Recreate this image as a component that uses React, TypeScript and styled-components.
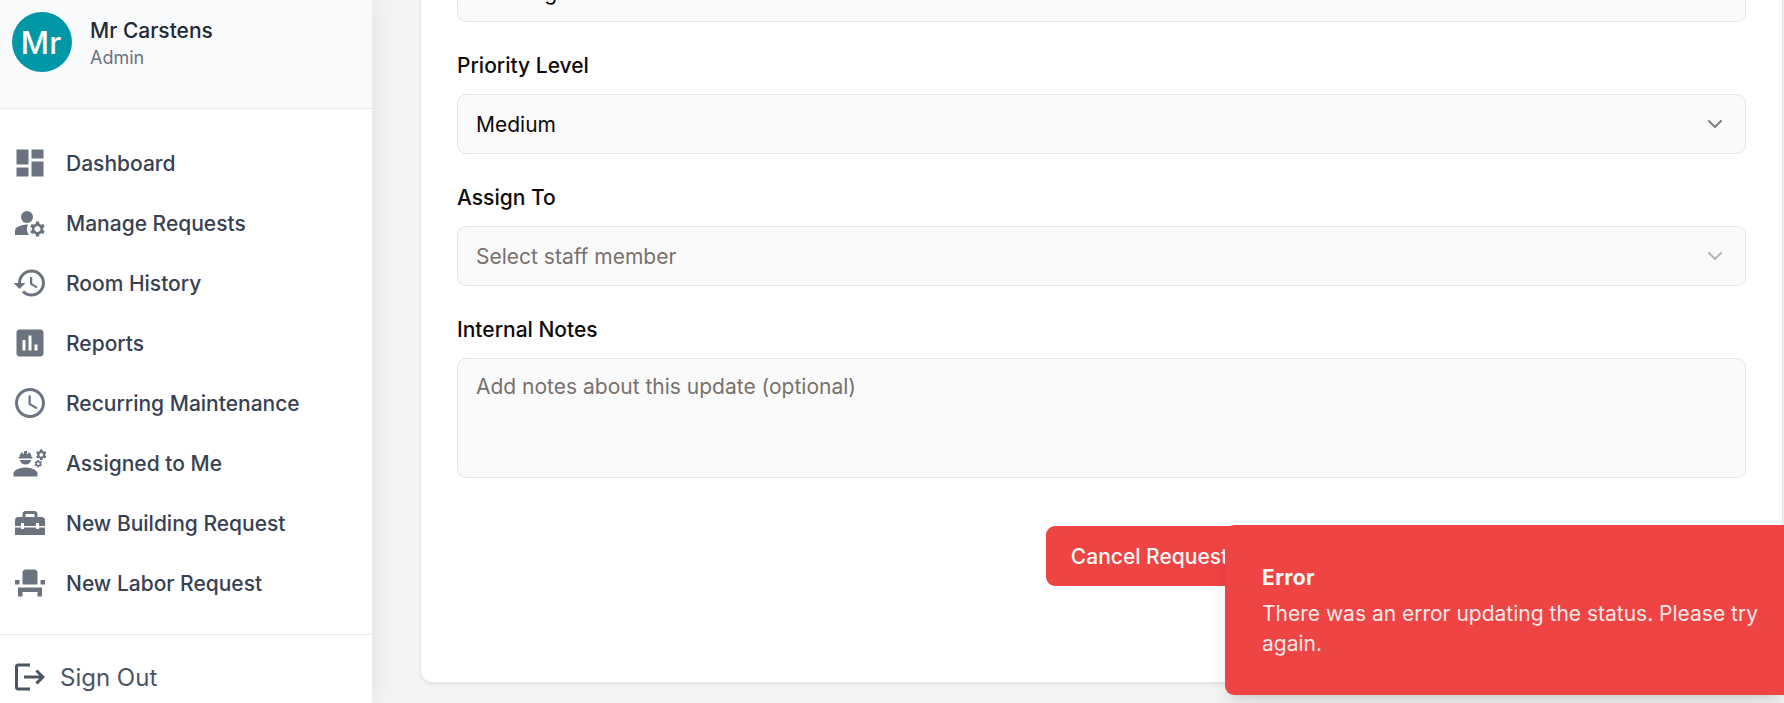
import React from "react";
import styled, { createGlobalStyle } from "styled-components";
import {
  MdAccessTime,
  MdAssessment,
  MdDashboard,
  MdEngineering,
  MdEventSeat,
  MdHistory,
  MdHomeRepairService,
  MdLogout,
  MdManageAccounts,
} from "react-icons/md";
import { ChevronDown } from "lucide-react";

const GlobalStyle = createGlobalStyle`
  *, *::before, *::after { box-sizing: border-box; }
  body {
    margin: 0;
    font-family: Inter, "Liberation Sans", sans-serif;
    background: #f3f4f6;
    overflow: hidden;
  }
  button, textarea { font-family: inherit; }
`;

const Page = styled.div`
  display: flex;
  height: 703px;
  overflow: hidden;
`;

const Sidebar = styled.aside`
  display: flex;
  flex-direction: column;
  flex: none;
  width: 372px;
  background: #fff;
  box-shadow: 0 0 24px rgba(0, 0, 0, 0.09);
`;

const Profile = styled.header`
  display: flex;
  align-items: flex-start;
  gap: 18px;
  flex: none;
  height: 109px;
  padding: 12px;
  background: #f9fafb;
  border-bottom: 1px solid #e5e7eb;
`;

const Avatar = styled.div`
  display: flex;
  align-items: center;
  justify-content: center;
  width: 60px;
  height: 60px;
  padding: 2px 2px 0 0;
  border-radius: 50%;
  background: #0097a7;
  color: #fff;
  font-size: 31px;
  font-weight: 450;
  line-height: 36px;
`;

const Identity = styled.div`
  display: flex;
  flex-direction: column;
  padding-top: 4px;
`;

const UserName = styled.span`
  font-size: 21px;
  font-weight: 500;
  line-height: 30px;
  color: #1f2937;
`;

const UserRole = styled.span`
  font-size: 18px;
  line-height: 24px;
  color: #6b7280;
`;

const Nav = styled.nav`
  display: flex;
  flex-direction: column;
  flex: none;
  height: 525px;
  padding: 24px 0 0;
`;

const NavItem = styled.a`
  display: flex;
  align-items: center;
  gap: 18px;
  height: 60px;
  padding: 0 12px;
  font-size: 21px;
  font-weight: 500;
  color: #374151;

  svg { color: #6b7280; flex: none; }
`;

const SignOut = styled.button`
  display: flex;
  align-items: center;
  gap: 12px;
  flex: none;
  height: 85px;
  padding: 0 12px;
  border: 0;
  border-top: 1px solid #e5e7eb;
  background: none;
  font-size: 24px;
  color: #4b5563;
`;

const Main = styled.main`
  display: flex;
  flex-direction: column;
  justify-content: flex-end;
  flex: 1;
  padding: 0 1px 20px 48px;
`;

const Card = styled.form`
  display: flex;
  flex-direction: column;
  gap: 30px;
  flex: none;
  padding: 36px 36px 96px;
  background: #fff;
  border: 1px solid #e7e5e4;
  border-radius: 12px;
  box-shadow: 0 1.5px 3px rgba(0, 0, 0, 0.05);
`;

const Field = styled.div`
  display: flex;
  flex-direction: column;
  gap: 12px;
`;

const Label = styled.label`
  margin: -1px 0 1px;
  font-size: 21px;
  font-weight: 500;
  line-height: 30px;
  color: #0c0a09;
`;

const Select = styled.button<{ $placeholder?: boolean }>`
  display: flex;
  align-items: center;
  justify-content: space-between;
  height: 60px;
  padding: 0 18px;
  border: 1px solid #e5e5e5;
  border-radius: 9px;
  background: #fafafa;
  font-size: 21px;
  line-height: 30px;
  color: ${(p) => (p.$placeholder ? "#78716c" : "#0c0a09")};

  svg { opacity: 0.5; }
`;

const SelectValue = styled.span`
  padding-top: 2px;
`;

const Notes = styled.textarea`
  display: block;
  height: 120px;
  padding: 13px 18px 12px;
  border: 1px solid #e5e5e5;
  border-radius: 9px;
  background: #fafafa;
  font-size: 21px;
  line-height: 30px;
  resize: none;

  &::placeholder { color: #78716c; opacity: 1; }
`;

const Actions = styled.div`
  display: flex;
  padding: 18px 0 0 589px;
`;

const CancelButton = styled.button`
  height: 60px;
  width: 207px;
  padding: 0;
  border: 0;
  border-radius: 9px;
  background: #ef4444;
  color: #fafaf9;
  font-size: 21px;
  font-weight: 500;
  white-space: nowrap;
`;

const Toast = styled.div`
  position: absolute;
  left: 1225px;
  top: 525px;
  width: 559px;
  height: 170px;
  padding: 38px 0 0 37px;
  border-radius: 9px 0 0 9px;
  background: #ef4444;
  color: #fafaf9;
  font-size: 21px;
  line-height: 30px;
  box-shadow: 0 15px 22.5px -4.5px rgba(0, 0, 0, 0.1), 0 6px 9px -6px rgba(0, 0, 0, 0.1);
`;

const ToastTitle = styled.div`
  margin-bottom: 6px;
  font-weight: 700;
  letter-spacing: 0.4px;
`;

const ToastMessage = styled.div`
  width: 510px;
  opacity: 0.9;
`;

const navItems = [
  { label: "Dashboard", Icon: MdDashboard },
  { label: "Manage Requests", Icon: MdManageAccounts },
  { label: "Room History", Icon: MdHistory },
  { label: "Reports", Icon: MdAssessment },
  { label: "Recurring Maintenance", Icon: MdAccessTime },
  { label: "Assigned to Me", Icon: MdEngineering },
  { label: "New Building Request", Icon: MdHomeRepairService },
  { label: "New Labor Request", Icon: MdEventSeat },
];

export default function App() {
  return (
    <>
      <GlobalStyle />
      <Page>
        <Sidebar>
          <Profile>
            <Avatar>Mr</Avatar>
            <Identity>
              <UserName>Mr Carstens</UserName>
              <UserRole>Admin</UserRole>
            </Identity>
          </Profile>
          <Nav>
            {navItems.map(({ label, Icon }) => (
              <NavItem key={label}>
                <Icon size={36} />
                {label}
              </NavItem>
            ))}
          </Nav>
          <SignOut>
            <MdLogout size={36} />
            Sign Out
          </SignOut>
        </Sidebar>
        <Main>
          <Card>
            <Field>
              <Select type="button">
                <SelectValue>Pending</SelectValue>
                <ChevronDown size={24} />
              </Select>
            </Field>
            <Field>
              <Label>Priority Level</Label>
              <Select type="button">
                <SelectValue>Medium</SelectValue>
                <ChevronDown size={24} />
              </Select>
            </Field>
            <Field>
              <Label>Assign To</Label>
              <Select type="button" $placeholder>
                <SelectValue>Select staff member</SelectValue>
                <ChevronDown size={24} />
              </Select>
            </Field>
            <Field>
              <Label>Internal Notes</Label>
              <Notes placeholder="Add notes about this update (optional)" />
            </Field>
            <Actions>
              <CancelButton type="button">Cancel Request</CancelButton>
            </Actions>
          </Card>
        </Main>
        <Toast role="alert">
          <ToastTitle>Error</ToastTitle>
          <ToastMessage>There was an error updating the status. Please try again.</ToastMessage>
        </Toast>
      </Page>
    </>
  );
}
